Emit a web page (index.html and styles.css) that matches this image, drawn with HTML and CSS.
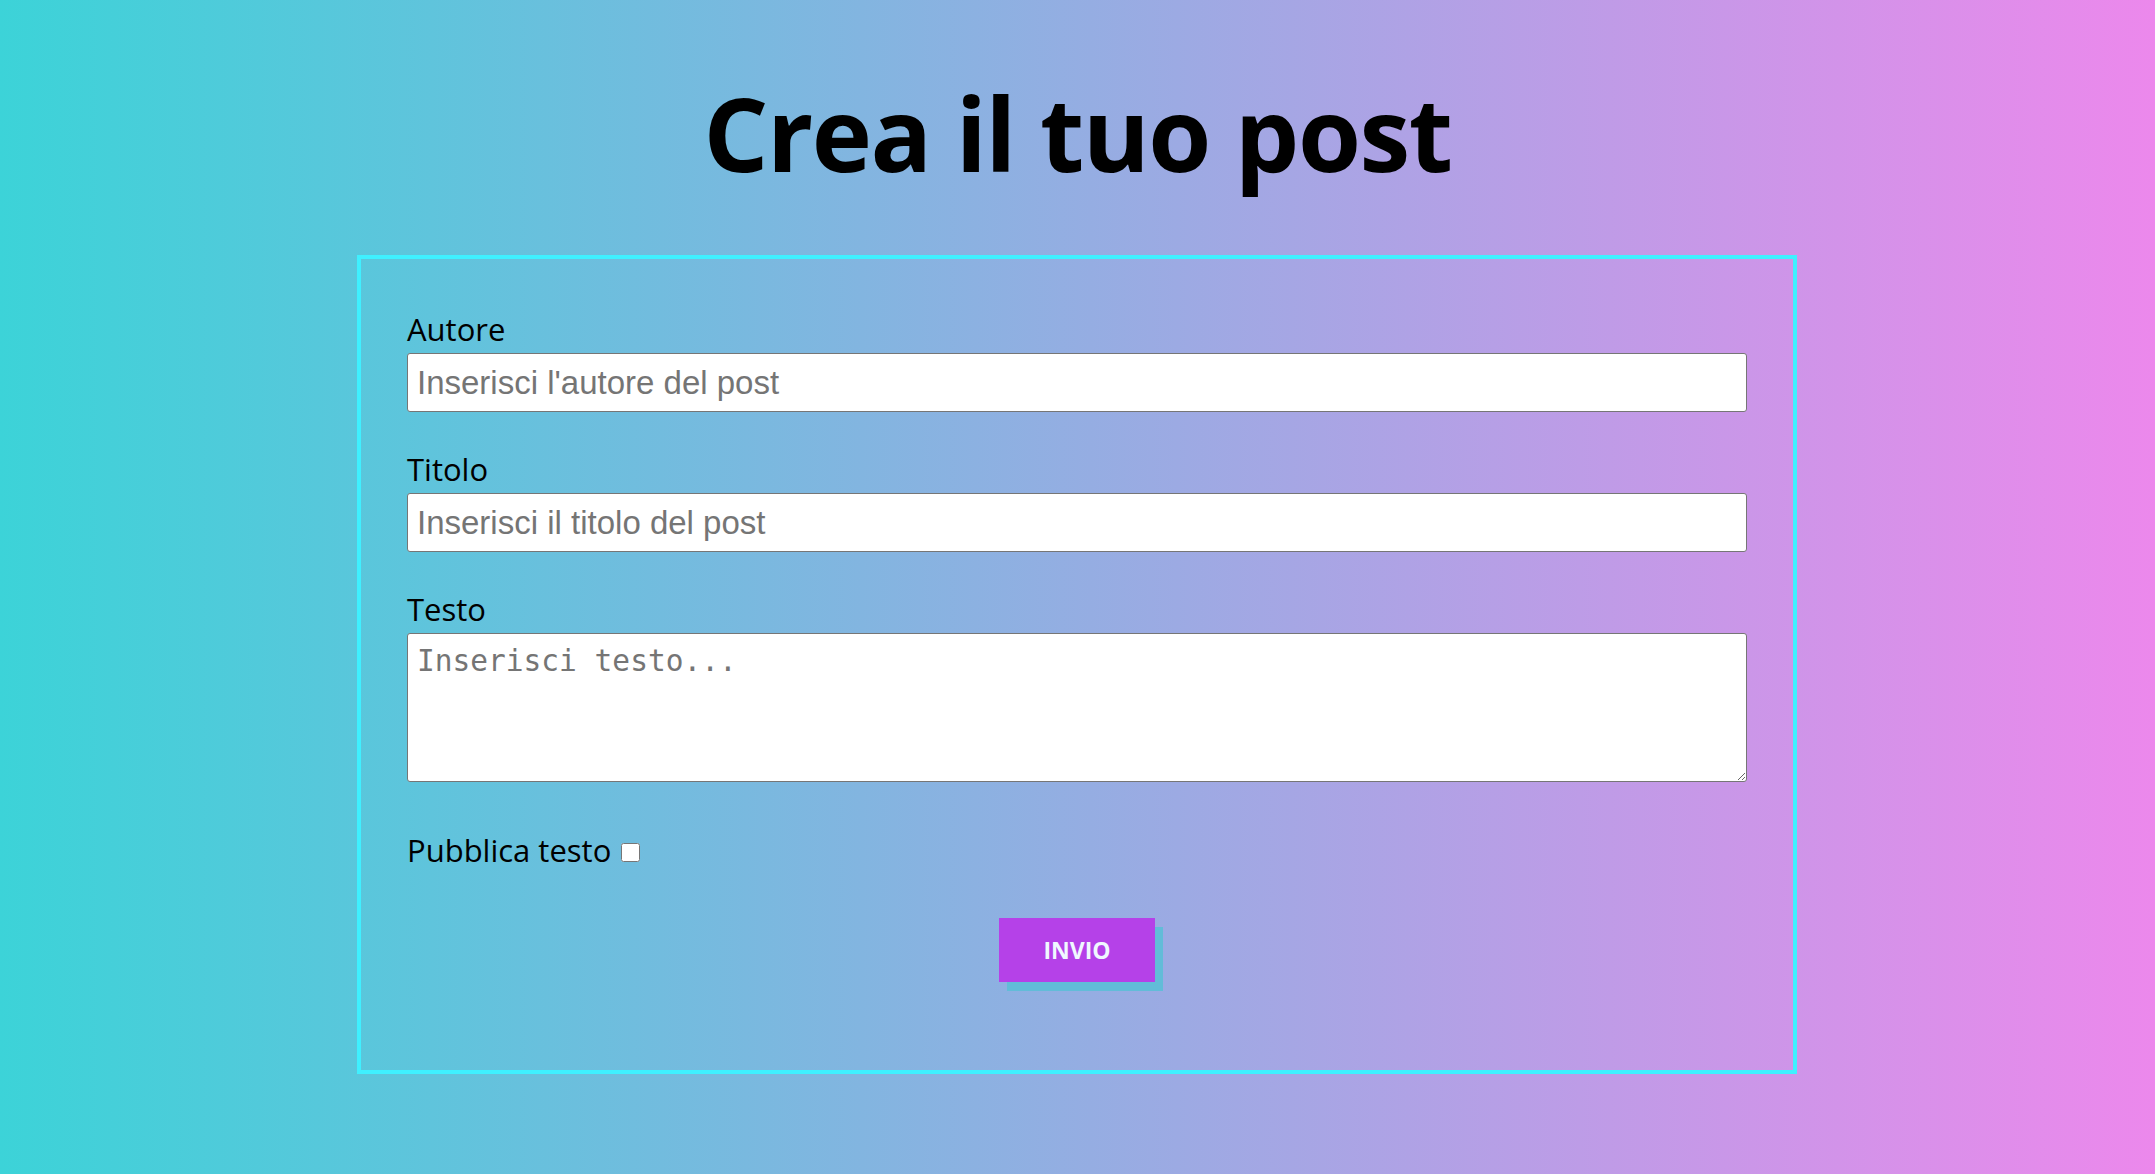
FILE: index.html
```html
<!DOCTYPE html>
<html lang="it">
<head>
<meta charset="utf-8">
<title>Crea il tuo post</title>
<link rel="stylesheet" href="styles.css">
</head>
<body>
<main class="page">
  <h1 class="title">Crea il tuo post</h1>
  <form class="frame">
    <label class="label" for="autore">Autore</label>
    <input class="field" id="autore" type="text" placeholder="Inserisci l'autore del post">
    <label class="label" for="titolo">Titolo</label>
    <input class="field" id="titolo" type="text" placeholder="Inserisci il titolo del post">
    <label class="label" for="testo">Testo</label>
    <textarea class="area" id="testo" placeholder="Inserisci testo..."></textarea>
    <div class="check-row">
      <label class="check-label" for="pubblica">Pubblica testo</label>
      <input class="check" id="pubblica" type="checkbox">
    </div>
    <div class="actions">
      <button class="btn" type="button">INVIO</button>
    </div>
  </form>
</main>
</body>
</html>
```

FILE: styles.css
```css
html, body {
  margin: 0;
  padding: 0;
  height: 100%;
}

body {
  background: linear-gradient(to right, #3cd3d8, #ec88ec);
  font-family: "Open Sans", "Noto Sans", sans-serif;
  color: #000;
}

.page {
  display: flex;
  flex-direction: column;
  align-items: center;
  padding-top: 82px;
}

.title {
  margin: 0;
  font-size: 102px;
  line-height: 102px;
  font-weight: 700;
  letter-spacing: -1.5px;
  height: 102px;
}

.frame {
  box-sizing: border-box;
  width: 1440px;
  margin-top: 71px;
  margin-left: -1px;
  border: 4px solid #3ff0ff;
  padding: 50px 46px 88px;
  display: flex;
  flex-direction: column;
}

.label {
  display: block;
  font-size: 31px;
  line-height: 40px;
  margin-top: 37px;
  margin-bottom: 4px;
}

.label:first-child {
  margin-top: 0;
}

.field {
  box-sizing: border-box;
  height: 59px;
  width: 100%;
  margin: 0;
  padding: 0 9px;
  border: 1px solid #767676;
  border-radius: 3px;
  background: #fff;
  font-family: "Liberation Sans", Arial, sans-serif;
  font-size: 33px;
  color: #000;
  outline: none;
}

.field::placeholder,
.area::placeholder {
  color: #757575;
  opacity: 1;
}

.area {
  display: block;
  box-sizing: border-box;
  height: 149px;
  width: 100%;
  margin: 0;
  padding: 10px 9px;
  border: 1px solid #767676;
  border-radius: 3px;
  background: #fff;
  font-family: "DejaVu Sans Mono", "Liberation Mono", monospace;
  font-size: 29.5px;
  resize: both;
  outline: none;
}

.check-row {
  display: flex;
  align-items: center;
  margin-top: 48px;
  height: 40px;
  font-size: 31px;
  line-height: 40px;
}

.check {
  width: 19px;
  height: 19px;
  margin: 4px 0 0 10px;
}

.actions {
  display: flex;
  justify-content: center;
  margin-top: 48px;
}

.btn {
  width: 156px;
  height: 64px;
  border: none;
  background: #b541e8;
  color: #f0f8ff;
  font-family: "Open Sans", "Noto Sans", sans-serif;
  font-weight: 700;
  font-size: 23px;
  box-shadow: 8px 9px 0 #62bcd8;
  cursor: pointer;
  padding: 0;
}
```
